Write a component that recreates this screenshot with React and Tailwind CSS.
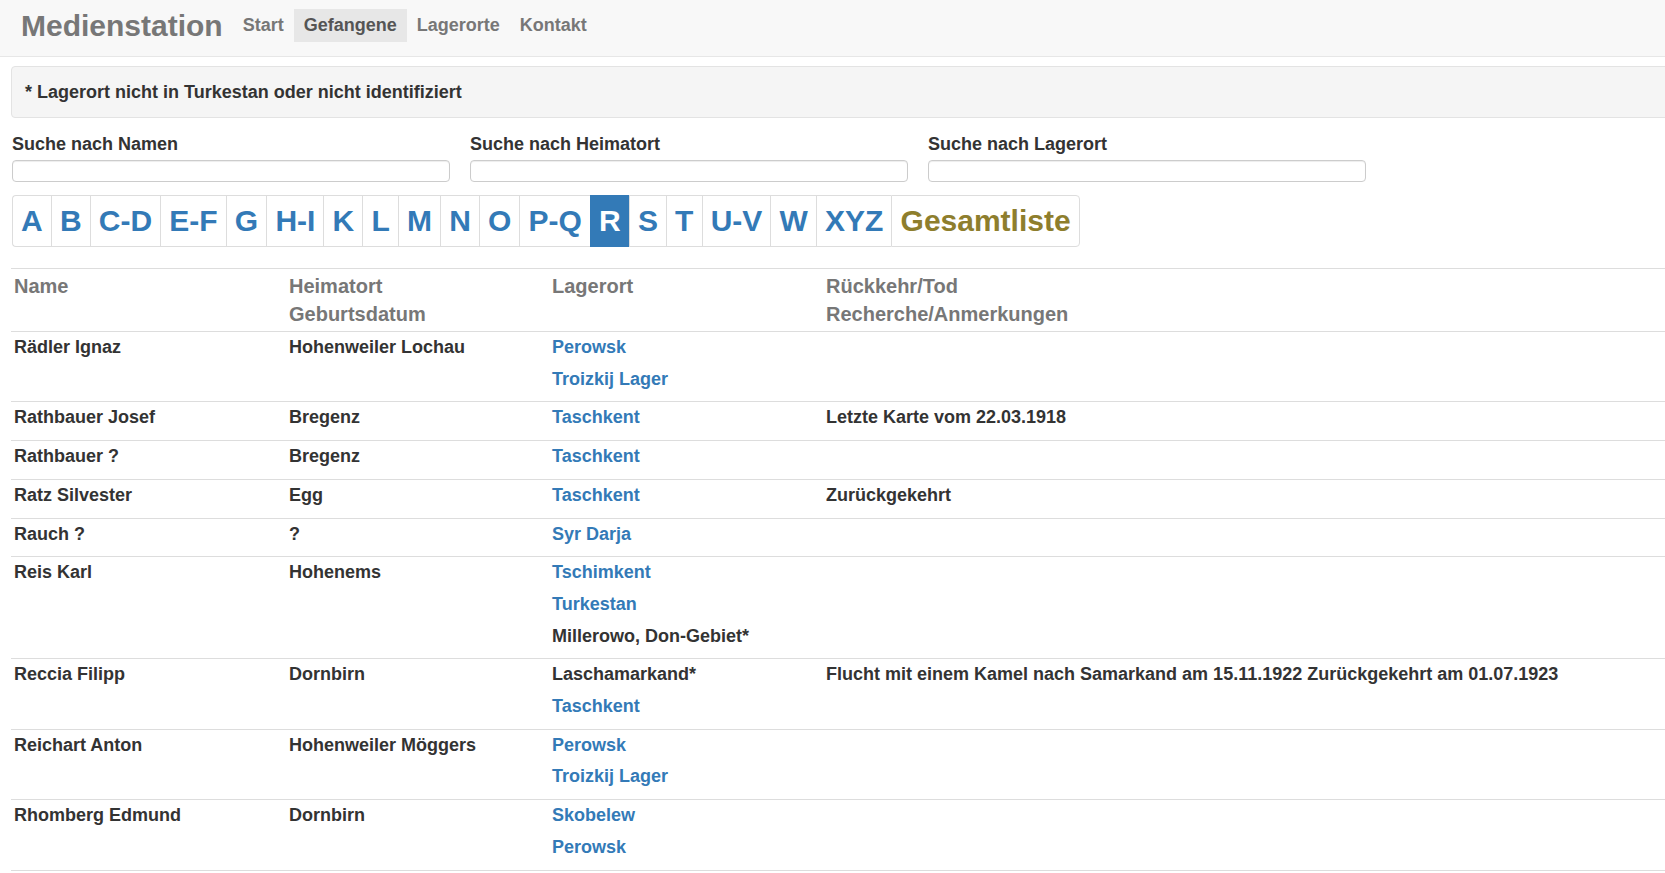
import React from 'react';

const letters = ['A', 'B', 'C-D', 'E-F', 'G', 'H-I', 'K', 'L', 'M', 'N', 'O', 'P-Q', 'R', 'S', 'T', 'U-V', 'W', 'XYZ'];

const rows = [
  { name: 'Rädler Ignaz', home: 'Hohenweiler Lochau', camps: [['Perowsk', true], ['Troizkij Lager', true]], note: '' },
  { name: 'Rathbauer Josef', home: 'Bregenz', camps: [['Taschkent', true]], note: 'Letzte Karte vom 22.03.1918' },
  { name: 'Rathbauer ?', home: 'Bregenz', camps: [['Taschkent', true]], note: '' },
  { name: 'Ratz Silvester', home: 'Egg', camps: [['Taschkent', true]], note: 'Zurückgekehrt' },
  { name: 'Rauch ?', home: '?', camps: [['Syr Darja', true]], note: '' },
  { name: 'Reis Karl', home: 'Hohenems', camps: [['Tschimkent', true], ['Turkestan', true], ['Millerowo, Don-Gebiet*', false]], note: '' },
  { name: 'Reccia Filipp', home: 'Dornbirn', camps: [['Laschamarkand*', false], ['Taschkent', true]], note: 'Flucht mit einem Kamel nach Samarkand am 15.11.1922 Zurückgekehrt am 01.07.1923' },
  { name: 'Reichart Anton', home: 'Hohenweiler Möggers', camps: [['Perowsk', true], ['Troizkij Lager', true]], note: '' },
  { name: 'Rhomberg Edmund', home: 'Dornbirn', camps: [['Skobelew', true], ['Perowsk', true]], note: '' },
];

const Line = ({ children, link }) => (
  <div className={`mb-[6px] leading-[25.7px] ${link ? 'text-[#337ab7]' : 'text-[#333]'}`}>{children}</div>
);

export default function App() {
  return (
    <div className="w-full overflow-hidden bg-white font-['Liberation_Sans',Arial,sans-serif] font-bold text-[#333]">
      {/* Navbar */}
      <nav className="h-[57px] bg-[#f8f8f8] border-b border-[#e7e7e7] flex items-start pt-[9px] pl-[21px]">
        <span className="text-[30px] leading-[34px] text-[#777] mr-[10px]">Medienstation</span>
        <div className="flex text-[18px] leading-[33px] text-[#777]">
          <a className="px-[10px]">Start</a>
          <a className="px-[10px] bg-[#e7e7e7] text-[#555]">Gefangene</a>
          <a className="px-[10px]">Lagerorte</a>
          <a className="px-[10px]">Kontakt</a>
        </div>
      </nav>

      <div className="w-[1720px] pl-[11px] pt-[9px]">
        {/* Hint */}
        <div className="bg-[#f5f5f5] border border-[#e3e3e3] rounded-[4px] pt-[12px] pb-[12px] pl-[13px] text-[18px] leading-[26px]">
          * Lagerort nicht in Turkestan oder nicht identifiziert
        </div>

        {/* Search */}
        <div className="flex gap-[20px] mt-[13px] pl-[1px] text-[18px]">
          {['Suche nach Namen', 'Suche nach Heimatort', 'Suche nach Lagerort'].map((l) => (
            <div key={l} className="w-[438px]">
              <div className="leading-[26px]">{l}</div>
              <input className="mt-[3px] block w-full h-[22px] border border-[#ccc] rounded-[4px] bg-white shadow-[inset_0_1px_1px_rgba(0,0,0,0.075)]" />
            </div>
          ))}
        </div>

        {/* Letters */}
        <div className="mt-[13px] pl-[1px] flex text-[30px] leading-[33px]">
          {letters.map((l, i) => (
            <a
              key={l}
              className={`pt-[8px] pb-[9px] px-[8.1px] border-y border-l ${i === 0 ? 'rounded-l-[4px]' : ''} ${
                l === 'R' ? 'bg-[#337ab7] border-[#337ab7] text-white' : 'border-[#ddd] text-[#337ab7]'
              }`}
            >
              {l}
            </a>
          ))}
          <a className="pt-[8px] pb-[9px] px-[8.1px] border border-[#ddd] rounded-r-[4px] text-[#8e7e2d]">Gesamtliste</a>
        </div>

        {/* Table */}
        <table className="mt-[21px] table-fixed border-collapse w-[1700px] text-[18px] text-left">
          <thead>
            <tr className="border-t border-[#ddd] text-[#777] text-[20px] leading-[28px] align-top">
              <th className="w-[275px] px-[3px] pt-[3px] pb-[3px]">Name</th>
              <th className="w-[263px] px-[3px] pt-[3px] pb-[3px]">
                <div>Heimatort</div>
                <div>Geburtsdatum</div>
              </th>
              <th className="w-[274px] px-[3px] pt-[3px] pb-[3px]">Lagerort</th>
              <th className="px-[3px] pt-[3px] pb-[3px]">
                <div>Rückkehr/Tod</div>
                <div>Recherche/Anmerkungen</div>
              </th>
            </tr>
          </thead>
          <tbody>
            {rows.map((r) => (
              <tr key={r.name} className="border-t border-b border-[#ddd] align-top">
                <td className="px-[3px] pt-[3px] pb-[3px]">
                  <Line>{r.name}</Line>
                </td>
                <td className="px-[3px] pt-[3px] pb-[3px]">
                  <Line>{r.home}</Line>
                </td>
                <td className="px-[3px] pt-[3px] pb-[3px]">
                  {r.camps.map(([c, link], i) => (
                    <Line key={i} link={link}>{c}</Line>
                  ))}
                </td>
                <td className="px-[3px] pt-[3px] pb-[3px] whitespace-nowrap">
                  {r.note && <Line>{r.note}</Line>}
                </td>
              </tr>
            ))}
          </tbody>
        </table>
      </div>
    </div>
  );
}
